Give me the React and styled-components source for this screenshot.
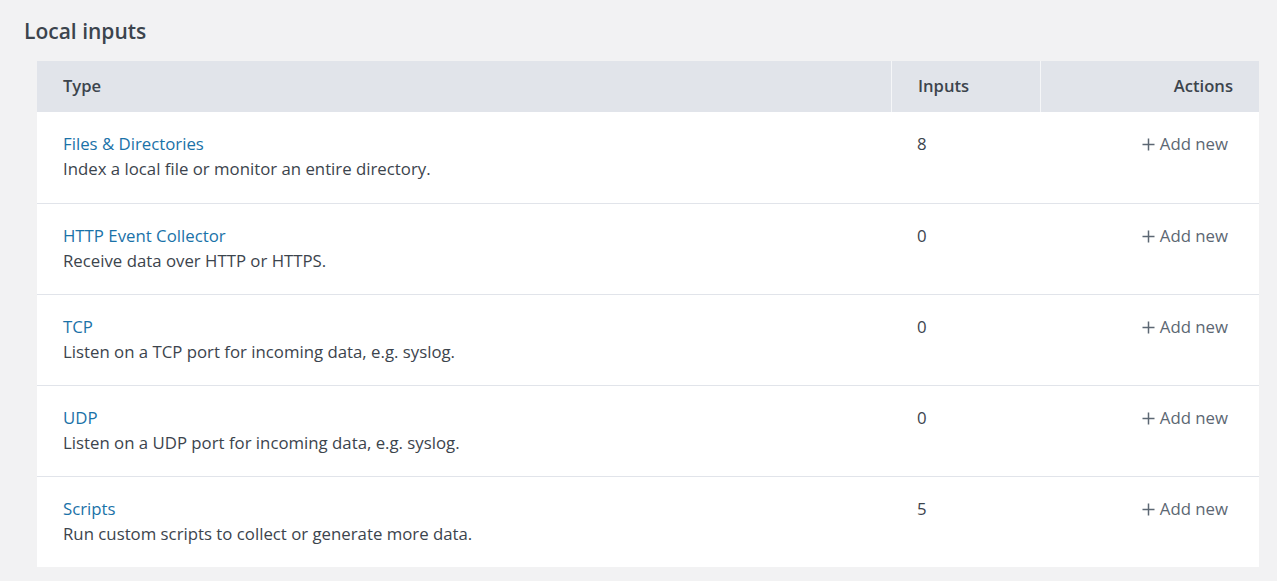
import React from 'react'
import styled, { createGlobalStyle } from 'styled-components'

const GlobalStyle = createGlobalStyle`
    body {
        margin: 0;
        background-color: #f2f2f3;
        font-family: 'Open Sans', 'Lato', sans-serif;
        color: #3c444d;
    }
`

const Page = styled.div`
    padding: 19px 18px 14px 24px;
`

const Title = styled.h2`
    margin: 0 0 18px 0;
    font-size: 21px;
    line-height: 24px;
    font-weight: 600;
    color: #3c444d;
`

const Table = styled.div`
    margin-left: 13px;
    background-color: #ffffff;
`

const Grid = styled.div`
    display: grid;
    grid-template-columns: 854px 149px 1fr;
`

const HeadRow = styled(Grid)`
    background-color: #e1e4ea;
    height: 51px;
`

const HeadCell = styled.div`
    display: flex;
    align-items: center;
    justify-content: ${p => (p.right ? 'flex-end' : 'flex-start')};
    padding: 0 26px 2px;
    font-size: 16.6px;
    font-weight: 600;
    color: #3c444d;
    border-left: ${p => (p.first ? 'none' : '1px solid #f5f6f8')};
`

const Row = styled(Grid)`
    height: 91px;
    box-sizing: border-box;
    border-top: ${p => (p.first ? 'none' : '1px solid #e1e4ea')};
`

const Cell = styled.div`
    padding: 19px 26px 0 26px;
    font-size: 16.8px;
    line-height: 25px;
    text-align: ${p => (p.right ? 'right' : 'left')};
`

const TypeLink = styled.a`
    display: block;
    color: #1a72a8;
    text-decoration: none;
`

const Desc = styled.div`
    color: #3c444d;
`

const Count = styled.span`
    color: #3c444d;
`

const AddNew = styled.a`
    display: inline-flex;
    align-items: center;
    gap: 5px;
    color: #5c6773;
    text-decoration: none;
    padding-right: 5px;

    svg {
        margin-top: 1px;
    }
`

const PlusIcon = () => (
    <svg width="13" height="13" viewBox="0 0 13 13">
        <path d="M6.5 0.5v12M0.5 6.5h12" stroke="#5c6773" strokeWidth="1.5" fill="none" />
    </svg>
)

const inputs = [
    { name: 'Files & Directories', desc: 'Index a local file or monitor an entire directory.', count: 8 },
    { name: 'HTTP Event Collector', desc: 'Receive data over HTTP or HTTPS.', count: 0 },
    { name: 'TCP', desc: 'Listen on a TCP port for incoming data, e.g. syslog.', count: 0 },
    { name: 'UDP', desc: 'Listen on a UDP port for incoming data, e.g. syslog.', count: 0 },
    { name: 'Scripts', desc: 'Run custom scripts to collect or generate more data.', count: 5 },
]

export default function App() {
    return (
        <>
            <GlobalStyle />
            <Page>
                <Title>Local inputs</Title>
                <Table>
                    <HeadRow>
                        <HeadCell first>Type</HeadCell>
                        <HeadCell>Inputs</HeadCell>
                        <HeadCell right>Actions</HeadCell>
                    </HeadRow>
                    {inputs.map((item, i) => (
                        <Row key={item.name} first={i === 0}>
                            <Cell>
                                <TypeLink href="#">{item.name}</TypeLink>
                                <Desc>{item.desc}</Desc>
                            </Cell>
                            <Cell>
                                <Count>{item.count}</Count>
                            </Cell>
                            <Cell right>
                                <AddNew href="#"><PlusIcon />Add new</AddNew>
                            </Cell>
                        </Row>
                    ))}
                </Table>
            </Page>
        </>
    )
}
